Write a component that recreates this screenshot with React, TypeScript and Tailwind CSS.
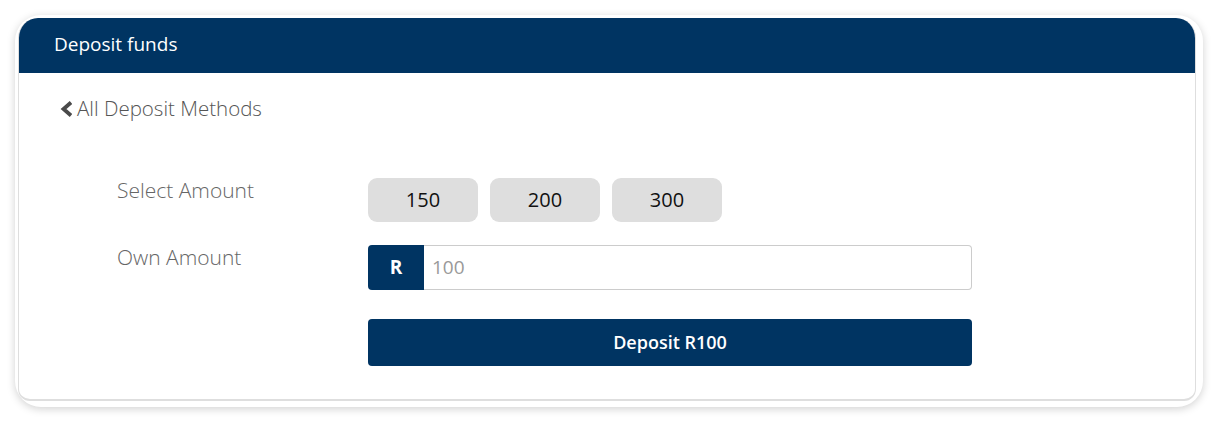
import { useState } from "react";

const amounts = ["150", "200", "300"];

export default function App() {
	const [amount, setAmount] = useState<string>("");

	return (
		<div className="w-[1217px] h-[421px] bg-white px-[15px] pt-[15px] font-['Open_Sans',sans-serif]">
			<div className="w-[1188px] h-[392px] bg-white rounded-[26px] shadow-[0_2px_8px_rgba(0,0,0,0.18)] pl-[3px] pr-[7px] pt-[3px] pb-[6px]">
				<div className="h-full flex flex-col rounded-t-[20px] rounded-b-[12px] overflow-hidden border-b-2 border-x border-[#dedede]">
					<div className="h-[55px] shrink-0 bg-[#003462] flex items-center pl-[36px] pb-[2px] text-white text-[19px] -mx-px">
						Deposit funds
					</div>
					<div className="flex-1 pl-[41px] pt-[21px]">
						<a href="#" className="flex items-center text-[20.5px] text-[#555] font-light h-[28px]">
							<svg width="14" height="16" viewBox="0 0 14 16" className="mr-[3px] mt-[1px]">
								<polyline points="11,1.5 3.5,8 11,14.5" fill="none" stroke="#4a4a4a" strokeWidth="3.8" />
							</svg>
							<span>All Deposit Methods</span>
						</a>
						<div className="grid grid-cols-[251px_604px] pl-[57px] mt-[56px] gap-y-[23px]">
							<div className="text-[21px] text-[#666] font-light leading-[24px]">Select Amount</div>
							<div className="flex gap-[12px]">
								{amounts.map((a) => (
									<button
										key={a}
										onClick={() => setAmount(a)}
										className="w-[110px] h-[44px] rounded-[9px] bg-[#dedede] text-[20px] font-medium text-[#111]"
									>
										{a}
									</button>
								))}
							</div>
							<div className="text-[21px] text-[#666] font-light leading-[24px]">Own Amount</div>
							<div className="flex flex-col gap-[29px]">
								<div className="flex h-[45px]">
									<div className="w-[56px] bg-[#003462] rounded-l-[4px] flex items-center justify-center text-white text-[19px] font-bold">
										R
									</div>
									<input
										value={amount}
										onChange={(e) => setAmount(e.target.value)}
										placeholder="100"
										className="flex-1 border border-l-0 border-[#cccccc] rounded-r-[4px] px-[8px] text-[19px] text-[#333] placeholder:text-[#999] outline-none"
									/>
								</div>
								<button className="h-[47px] bg-[#003462] rounded-[4px] text-white text-[18px] font-semibold">
									Deposit R{amount || "100"}
								</button>
							</div>
						</div>
					</div>
				</div>
			</div>
		</div>
	);
}
